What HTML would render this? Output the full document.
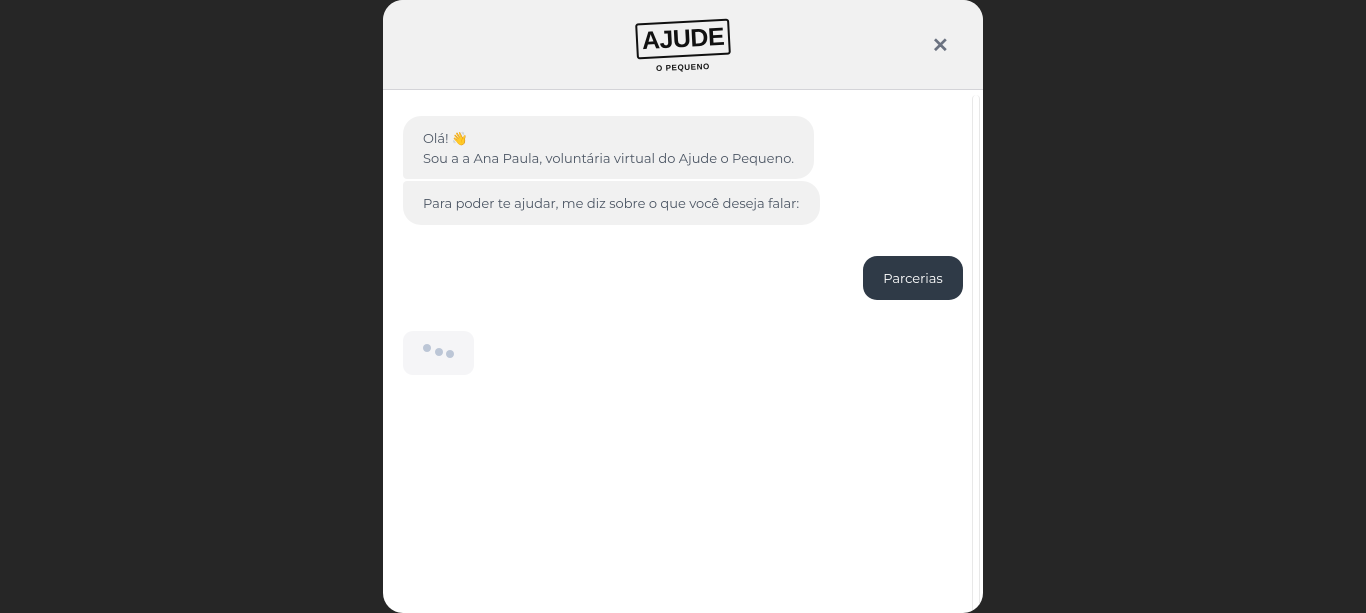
<!DOCTYPE html>
<html><head><meta charset="utf-8"><style>
body{margin:0;background:#262626;width:1366px;height:613px;overflow:hidden;font-family:"Montserrat","Liberation Sans",sans-serif;}
.m{position:absolute;left:383px;top:0;width:600px;height:613px;background:#fff;border-radius:20px;overflow:hidden}
.h{height:89px;background:#f1f1f1;border-bottom:1px solid #d4d4d8;position:relative}
.logo{position:absolute;left:253px;top:21px;width:94px;height:36px;border:2.5px solid #111;border-radius:3px;transform:rotate(-3deg);box-sizing:border-box;text-align:center;font:900 25px/32px "Liberation Sans",sans-serif;color:#111;letter-spacing:-0.5px}
.sub{position:absolute;left:273px;top:63px;font:bold 8px "Liberation Sans",sans-serif;color:#111;letter-spacing:0.6px;transform:rotate(-2deg)}
.x{position:absolute;left:549px;top:33px;font:bold 20px "Liberation Sans",sans-serif;color:#6b7280}
.b{position:absolute;background:#f1f1f1;color:#4b5563;font-size:13px;line-height:20px;padding:0 20px;box-sizing:border-box}
.sb{position:absolute;left:589px;top:95px;width:8px;height:518px;border-left:1px solid #e8e8e8;border-right:1px solid #e8e8e8;border-radius:4px;box-sizing:border-box}
.d{position:absolute;width:8px;height:8px;border-radius:50%;background:#bcc6d6}
</style></head><body>
<div class="m">
<div class="h"><div class="logo">AJUDE</div><div class="sub">O PEQUENO</div><div class="x">✕</div></div>
<div class="sb"></div>
<div class="b" style="left:20px;top:116px;width:411px;height:63px;border-radius:18px 18px 18px 4px;padding-top:13px">Olá! 👋<br>Sou a a Ana Paula, voluntária virtual do Ajude o Pequeno.</div>
<div class="b" style="left:20px;top:181px;width:417px;height:44px;border-radius:4px 18px 18px 18px;padding-top:13px">Para poder te ajudar, me diz sobre o que você deseja falar:</div>
<div class="b" style="left:480px;top:256px;width:100px;height:44px;border-radius:14px;background:#2f3a47;color:#fff;padding-top:13px;text-align:center">Parcerias</div>
<div class="b" style="left:20px;top:331px;width:71px;height:44px;border-radius:10px;background:#f5f5f7"></div>
<div class="d" style="left:40px;top:344px"></div><div class="d" style="left:52px;top:348px"></div><div class="d" style="left:63px;top:350px"></div>
</div>
</body></html>
